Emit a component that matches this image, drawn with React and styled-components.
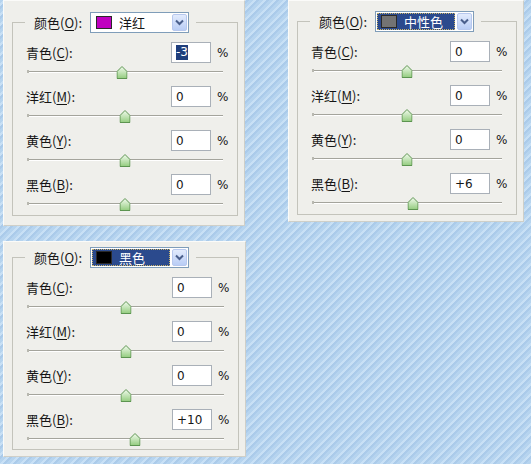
import React from 'react'
import styled, { createGlobalStyle } from 'styled-components'

const GlobalStyle = createGlobalStyle`
  html, body { margin: 0; height: 100%; }
  body {
    font-family: "Noto Sans CJK SC", "DejaVu Sans", sans-serif;
    font-size: 12px;
    color: #161616;
    background: repeating-linear-gradient(
      135deg,
      #b6d4ef 0px, #b6d4ef 2.5px,
      #c8e0f5 2.5px, #c8e0f5 4.6px,
      #abcbea 4.6px, #abcbea 7.07px
    );
  }
`

const panels = [
  { key: 'm', w: 242, h: 226, pt: 11, pb: 9, name: '洋红', swatch: '#c000c0', active: false, values: [-3, 0, 0, 0], selectFirst: true },
  { key: 'n', w: 236, h: 222, pt: 10, pb: 6, name: '中性色', swatch: '#737373', active: true, values: [0, 0, 0, 6] },
  { key: 'k', w: 243, h: 216, pt: 5, pb: 6, name: '黑色', swatch: '#000', active: true, values: [0, 0, 0, 10] },
]

const channels = [
  { name: '青色', key: 'C' },
  { name: '洋红', key: 'M' },
  { name: '黄色', key: 'Y' },
  { name: '黑色', key: 'B' },
]

const fmt = v => (v > 0 ? `+${v}` : `${v}`)

function Chevron() {
  return (
    <svg width="9" height="7" viewBox="0 0 9 7">
      <path d="M1 1.5 L4.5 5 L8 1.5" fill="none" stroke="#4a5f8c" strokeWidth="2" />
    </svg>
  )
}

function Thumb() {
  return (
    <svg width="11" height="13" viewBox="0 0 11 13">
      <defs>
        <linearGradient id="tg" x1="0" y1="0" x2="0" y2="1">
          <stop offset="0" stopColor="#f2fbee" />
          <stop offset="1" stopColor="#93cc7e" />
        </linearGradient>
      </defs>
      <path d="M0.5 5.5 L5.5 0.5 L10.5 5.5 V12.5 H0.5 Z" fill="url(#tg)" stroke="#5c9450" />
    </svg>
  )
}

function Label({ name, letter }) {
  return (
    <LabelText>
      {name}(<u>{letter}</u>):
    </LabelText>
  )
}

function Panel({ p }) {
  return (
    <Box $w={p.w} $h={p.h} $pt={p.pt} $pb={p.pb}>
      <Group>
        <Legend>
          <Label name="颜色" letter="O" />
          <Combo>
            <ComboValue $active={p.active}>
              <Swatch $color={p.swatch} />
              {p.name}
            </ComboValue>
            <ComboButton><Chevron /></ComboButton>
          </Combo>
        </Legend>
        {channels.map((c, i) => (
          <Row key={c.key}>
            <RowTop>
              <Label name={c.name} letter={c.key} />
              <Field>
                {p.selectFirst && i === 0 ? <Selected>{fmt(p.values[i])}</Selected> : fmt(p.values[i])}
              </Field>
              <Percent>%</Percent>
            </RowTop>
            <Slider>
              <Track />
              <ThumbWrap style={{ left: `${((p.values[i] + 100) / 200) * 100}%` }}>
                <Thumb />
              </ThumbWrap>
            </Slider>
          </Row>
        ))}
      </Group>
    </Box>
  )
}

export default function App() {
  return (
    <>
      <GlobalStyle />
      <Page>
        {panels.map(p => <Panel key={p.key} p={p} />)}
      </Page>
    </>
  )
}

const Page = styled.div`
  display: grid;
  grid-template-columns: 242px 236px;
  column-gap: 43px;
  row-gap: 15px;
  padding-left: 3px;
  align-items: start;
`

const Box = styled.div`
  box-sizing: border-box;
  width: ${p => p.$w}px;
  height: ${p => p.$h}px;
  background: #efefeb;
  border: 1px solid;
  border-color: #fbfbf9 #cfcfc8 #cfcfc8 #fbfbf9;
  padding: ${p => p.$pt}px 6px ${p => p.$pb}px 8px;
  display: flex;
  flex-direction: column;
`

const Group = styled.fieldset`
  flex: 1;
  margin: 0;
  min-width: 0;
  border: 1px solid #c3c3bb;
  padding: 9px 9px 0 13px;
  display: flex;
  flex-direction: column;
  gap: 7px;
`

const Legend = styled.legend`
  display: flex;
  align-items: center;
  gap: 8px;
  padding: 0 7px 0 9px;
  margin-left: -1px;
`

const LabelText = styled.span`
  flex: 1;
  white-space: nowrap;
  font-size: 13px;
  line-height: 21px;
  u { text-underline-offset: 2px; }
`

const Combo = styled.div`
  box-sizing: border-box;
  width: 99px;
  height: 21px;
  border: 1px solid #7f9db9;
  background: #fff;
  display: flex;
  align-items: stretch;
  padding: 1px;
  gap: 2px;
`

const ComboValue = styled.div`
  flex: 1;
  display: flex;
  align-items: center;
  gap: 7px;
  padding-left: 4px;
  font-size: 13px;
  line-height: 1;
  color: ${p => (p.$active ? '#fff' : '#161616')};
  background: ${p => (p.$active ? '#2b4a8d' : 'transparent')};
  outline: ${p => (p.$active ? '1px dotted #c8b46a' : 'none')};
  outline-offset: -1px;
`

const Swatch = styled.span`
  box-sizing: border-box;
  width: 16px;
  height: 13px;
  background: ${p => p.$color};
  border: 1px solid #2a2a2a;
`

const ComboButton = styled.div`
  box-sizing: border-box;
  width: 15px;
  display: flex;
  align-items: center;
  justify-content: center;
  border: 1px solid #b7c8ee;
  border-radius: 2px;
  background: linear-gradient(#e2ebfd, #b9cdf5);
`

const Row = styled.div`
  display: flex;
  flex-direction: column;
`

const RowTop = styled.div`
  display: flex;
  align-items: center;
  height: 21px;
`

const Field = styled.div`
  box-sizing: border-box;
  width: 40px;
  height: 21px;
  border: 1px solid #a9b0b8;
  background: #fff;
  padding-left: 4px;
  display: flex;
  align-items: center;
  font-family: "DejaVu Sans", sans-serif;
`

const Selected = styled.span`
  background: #1f3e7c;
  color: #fff;
  line-height: 15px;
`

const Percent = styled.span`
  margin-left: 6px;
  width: 11px;
  font-family: "DejaVu Sans", sans-serif;
`

const Slider = styled.div`
  position: relative;
  height: 16px;
  margin: 0 5px 0 1px;
`

const Track = styled.div`
  position: absolute;
  left: 0;
  right: 0;
  top: 8px;
  height: 1px;
  background: #a4a49c;
  border-bottom: 1px solid #fff;
  &::before {
    content: '';
    position: absolute;
    left: 0;
    top: -1px;
    width: 2px;
    height: 3px;
    background: #b8b8b0;
  }
`

const ThumbWrap = styled.div`
  position: absolute;
  top: 3px;
  width: 11px;
  height: 13px;
  transform: translateX(-50%);
  display: flex;
`
